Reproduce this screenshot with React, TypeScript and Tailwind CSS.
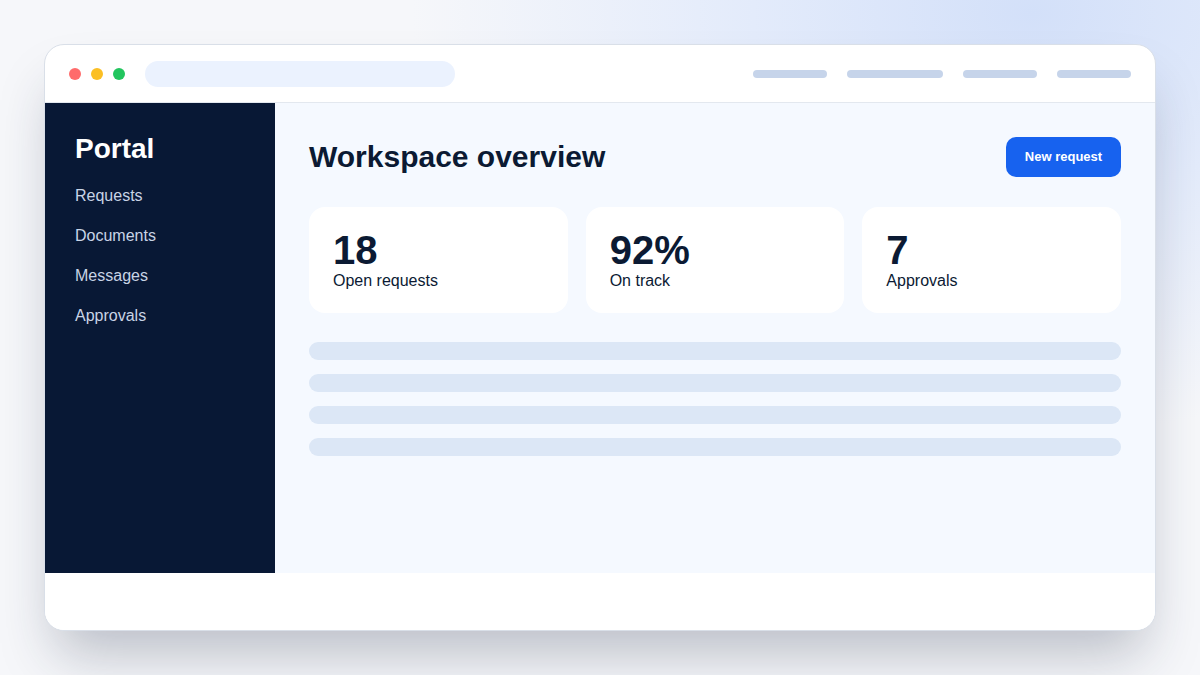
const navItems = ['Requests', 'Documents', 'Messages', 'Approvals']

const stats = [
  { value: '18', label: 'Open requests' },
  { value: '92%', label: 'On track' },
  { value: '7', label: 'Approvals' },
]

// widths of the placeholder links in the browser chrome
const chromeLinks = [74, 96, 74, 74]

export default function App() {
  return (
    <div
      className="h-[675px] w-[1200px] flex items-center justify-center bg-[#f6f7fa] bg-[radial-gradient(ellipse_620px_420px_at_86%_2%,#d3e0f9_0%,#e3ebfb_45%,rgba(246,247,250,0)_100%)]"
      style={{ fontFamily: '"Liberation Sans", Arial, sans-serif' }}
    >
      <div className="w-[1112px] h-[587px] flex flex-col rounded-[20px] border border-[#d9dfe8] bg-white overflow-hidden shadow-[0_34px_56px_-12px_rgba(30,41,66,0.28)]">
        <BrowserBar />
        <div className="flex h-[470px] shrink-0">
          <Sidebar />
          <Main />
        </div>
        <div className="flex-1 bg-white" />
      </div>
    </div>
  )
}

function BrowserBar() {
  return (
    <div className="h-[58px] shrink-0 flex items-center justify-between px-6 border-b border-[#e3e8ef]">
      <div className="flex items-center">
        <div className="flex items-center gap-[10px]">
          <span className="h-3 w-3 rounded-full bg-[#ff6b6b]" />
          <span className="h-3 w-3 rounded-full bg-[#fbbf24]" />
          <span className="h-3 w-3 rounded-full bg-[#22c55e]" />
        </div>
        <div className="ml-5 h-[26px] w-[310px] rounded-full bg-[#ebf2fe]" />
      </div>
      <div className="flex items-center gap-5">
        {chromeLinks.map((w, i) => (
          <span
            key={i}
            className="h-2 rounded-full bg-[#c6d4ea]"
            style={{ width: w }}
          />
        ))}
      </div>
    </div>
  )
}

function Sidebar() {
  return (
    <aside className="w-[230px] shrink-0 bg-[#081835] pl-[30px] pt-[29px]">
      <div className="text-[28px] leading-[34px] font-bold text-white">Portal</div>
      <nav className="mt-[18px] flex flex-col gap-4">
        {navItems.map((item) => (
          <span key={item} className="text-base leading-6 text-[#c9d4e6]">
            {item}
          </span>
        ))}
      </nav>
    </aside>
  )
}

function Main() {
  return (
    <main className="flex-1 bg-[#f5f9ff] px-[34px] pt-[34px]">
      <div className="h-10 flex items-center justify-between">
        <h1 className="text-[30px] leading-9 font-bold text-[#0b1a33]">
          Workspace overview
        </h1>
        <button className="h-10 w-[115px] rounded-[10px] bg-[#1762ef] text-[13px] font-bold text-white">
          New request
        </button>
      </div>

      <div className="mt-[30px] grid grid-cols-3 gap-[18px]">
        {stats.map((s) => (
          <div key={s.label} className="rounded-2xl bg-white px-6 pt-[23px] pb-[22px]">
            <div className="text-[40px] leading-10 font-bold text-[#0b1a33]">
              {s.value}
            </div>
            <div className="mt-px text-base leading-5 text-[#0b1a33]">{s.label}</div>
          </div>
        ))}
      </div>

      <div className="mt-[29px] flex flex-col gap-[14px]">
        {[0, 1, 2, 3].map((i) => (
          <div key={i} className="h-[18px] rounded-full bg-[#dce7f6]" />
        ))}
      </div>
    </main>
  )
}
